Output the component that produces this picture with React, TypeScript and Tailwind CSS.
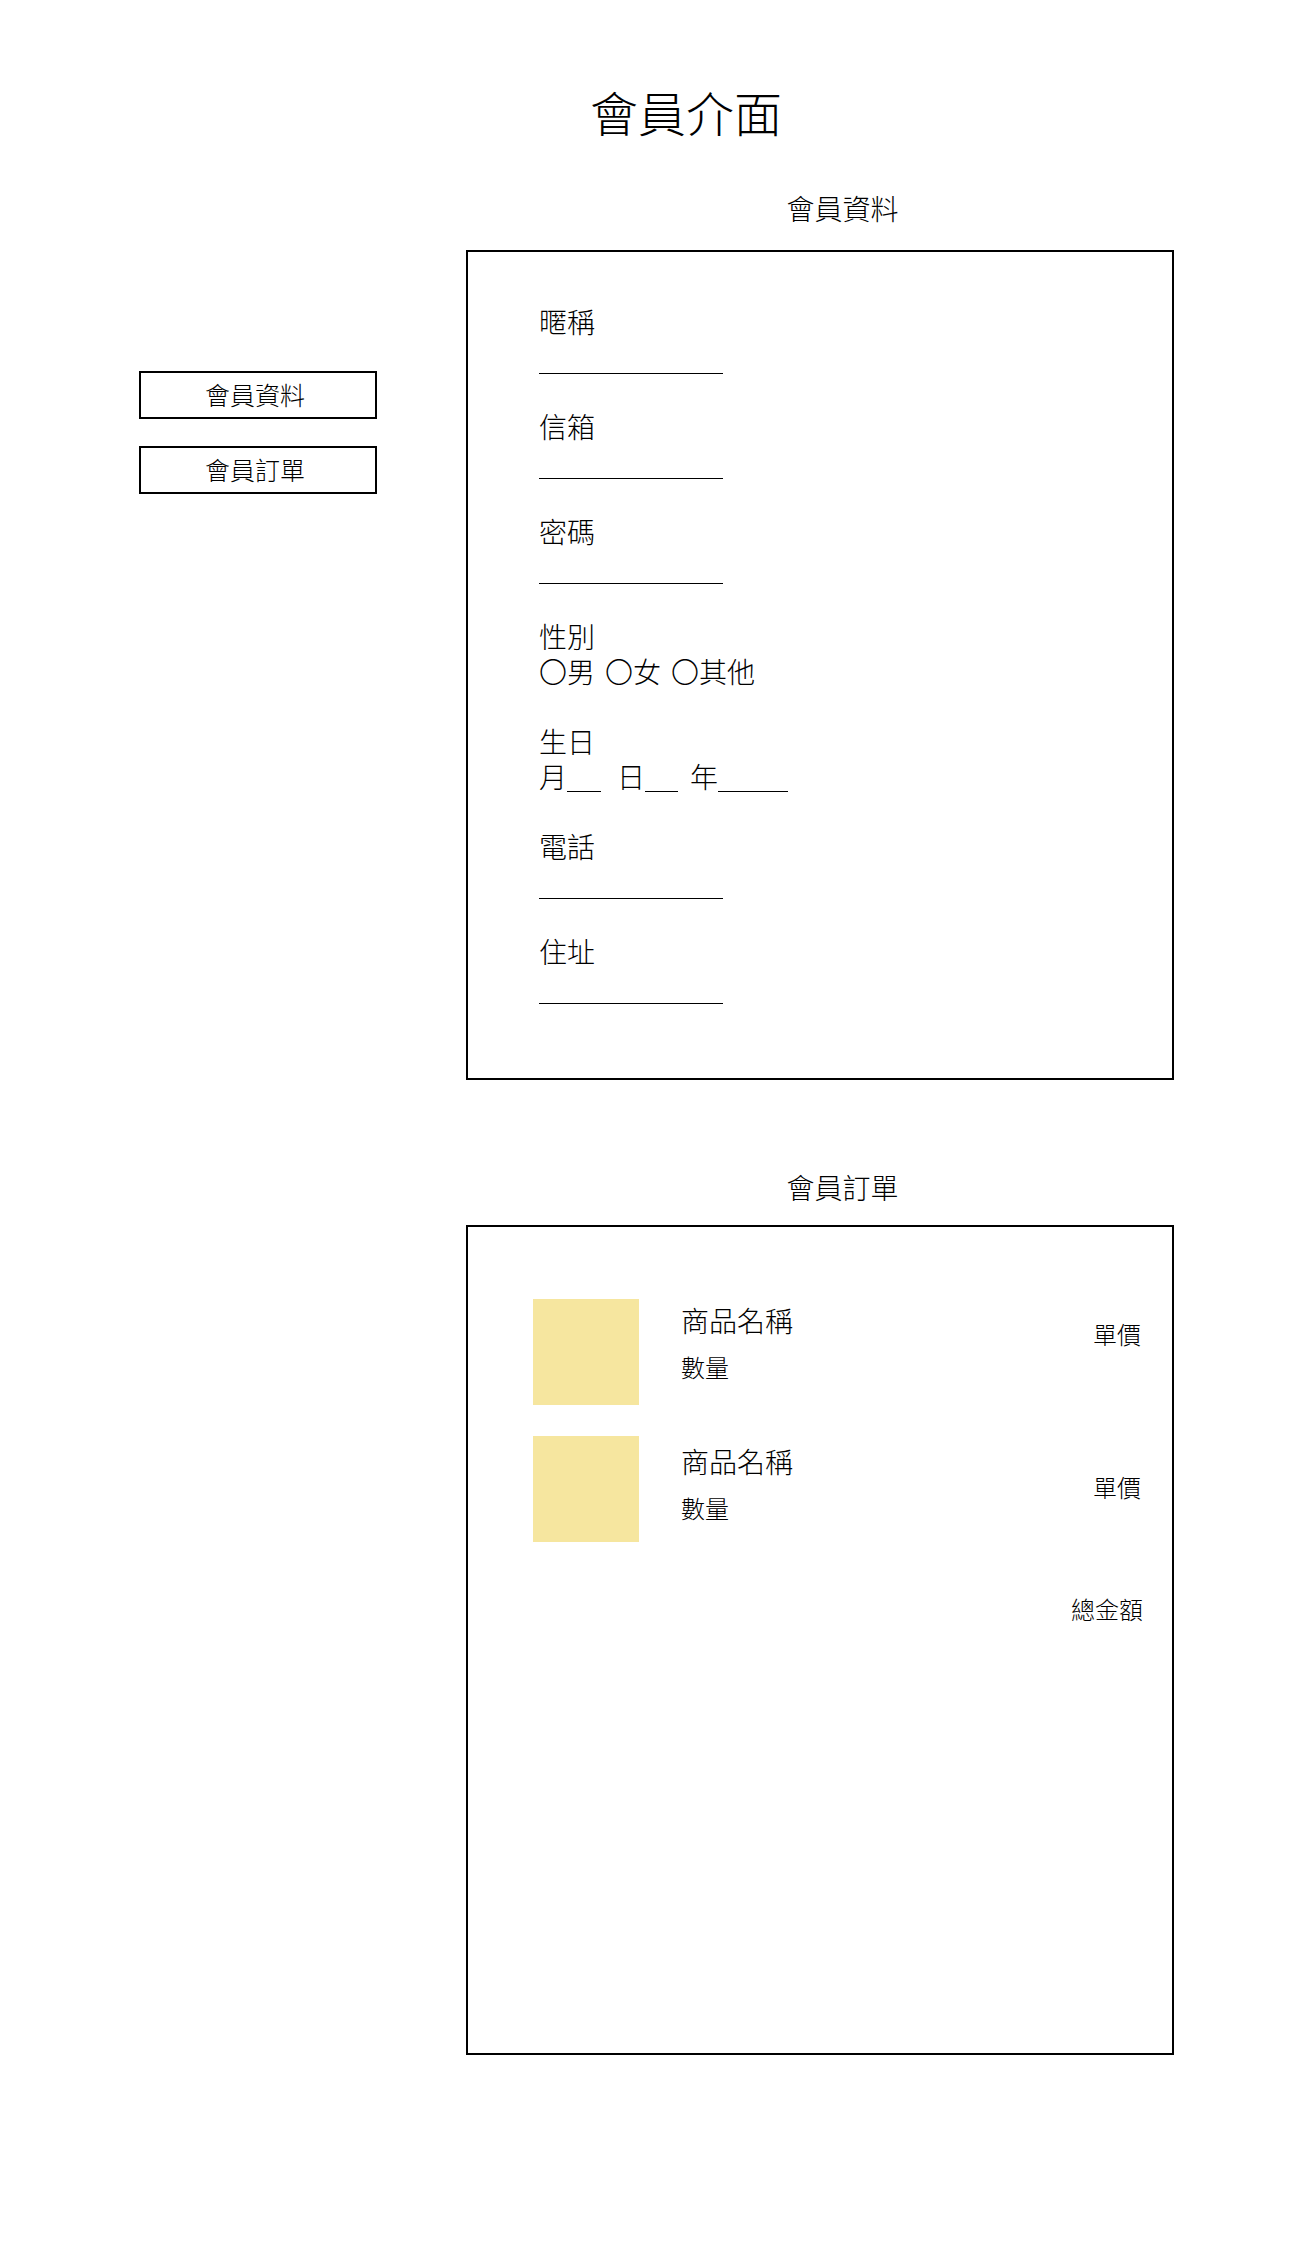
const font = { fontFamily: '"Noto Sans CJK TC", "Noto Sans CJK SC", sans-serif' }

function TextField({ label }: { label: string }) {
  return (
    <div>
      <div className="h-[35px] text-[28px] leading-[35px]">{label}</div>
      <div className="h-[35px] w-[184px] border-b border-black" />
    </div>
  )
}

function Product({ nameTop, qtyTop, priceTop }: { nameTop: string; qtyTop: string; priceTop: string }) {
  return (
    <div className="flex items-start">
      <div className="h-[106px] w-[106px] shrink-0 bg-[#f6e69f]" />
      <div className="ml-[42px] flex-1">
        <div className={`${nameTop} text-[28px] leading-[35px]`}>商品名稱</div>
        <div className={`${qtyTop} text-[24px] leading-[30px]`}>數量</div>
      </div>
      <div className={`${priceTop} mr-[2px] text-[24px] leading-[30px]`}>單價</div>
    </div>
  )
}

export default function App() {
  return (
    <div className="min-h-[2265px] w-full bg-white font-light text-black" style={font}>
      <h1 className="pl-[66px] pt-[87px] text-center text-[48px] font-light leading-[48px]">會員介面</h1>

      <div className="mt-[56px] flex">
        <div className="ml-[139px] mt-[180px] flex w-[238px] flex-col gap-[27px]">
          <div className="flex h-[48px] items-center justify-center border-2 border-black pr-[6px] text-[25px]">會員資料</div>
          <div className="flex h-[48px] items-center justify-center border-2 border-black pr-[6px] text-[25px]">會員訂單</div>
        </div>

        <div className="ml-[89px] w-[708px]">
          <div className="pl-[45px] text-center text-[28px] leading-[35px]">會員資料</div>
          <div className="mt-[24px] flex h-[830px] flex-col gap-[35px] border-2 border-black pl-[71px] pt-[52px]">
            <TextField label="暱稱" />
            <TextField label="信箱" />
            <TextField label="密碼" />
            <div className="text-[28px] leading-[35px]">
              <div>性別</div>
              <div className="flex gap-[10px]">
                <span>〇男</span>
                <span>〇女</span>
                <span>〇其他</span>
              </div>
            </div>
            <div className="text-[28px] leading-[35px]">
              <div>生日</div>
              <div className="flex items-baseline">
                <span>月</span>
                <span className="inline-block h-[20px] w-[34px] translate-y-[4px] border-b border-black" />
                <span className="ml-[16px]">日</span>
                <span className="inline-block h-[20px] w-[33px] translate-y-[4px] border-b border-black" />
                <span className="ml-[12px]">年</span>
                <span className="inline-block h-[20px] w-[70px] translate-y-[4px] border-b border-black" />
              </div>
            </div>
            <TextField label="電話" />
            <TextField label="住址" />
          </div>

          <div className="mt-[90px] pl-[45px] text-center text-[28px] leading-[35px]">會員訂單</div>
          <div className="mt-[20px] h-[830px] border-2 border-black pl-[65px] pr-[29px] pt-[72px]">
            <Product nameTop="mt-[4px]" qtyTop="mt-[14px]" priceTop="mt-[20px]" />
            <div className="mt-[31px]">
              <Product nameTop="mt-[8px]" qtyTop="mt-[14px]" priceTop="mt-[36px]" />
            </div>
            <div className="mt-[52px] text-right text-[24px] leading-[30px]">總金額</div>
          </div>
        </div>
      </div>
    </div>
  )
}
